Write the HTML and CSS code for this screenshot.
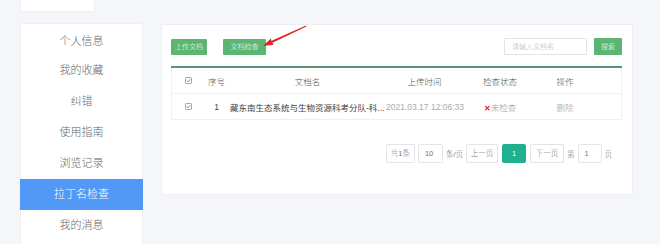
FILE: index.html
```html
<!DOCTYPE html>
<html lang="zh">
<head>
<meta charset="utf-8">
<link rel="stylesheet" href="styles.css">
</head>
<body>
<div class="topbox"></div>
<div class="layout">
  <nav class="sidebar">
    <div class="nav-item">个人信息</div>
    <div class="nav-item">我的收藏</div>
    <div class="nav-item">纠错</div>
    <div class="nav-item">使用指南</div>
    <div class="nav-item">浏览记录</div>
    <div class="nav-item active">拉丁名检查</div>
    <div class="nav-item">我的消息</div>
  </nav>
  <main class="panel">
    <svg class="arrow" width="160" height="30" viewBox="0 0 160 30">
      <polygon points="144,0.4 144.5,1.4 110.5,17.8 109.6,15.8" fill="#e02626"/>
      <polygon points="101,21 111.6,19.8 108.6,13.8" fill="#e02626"/>
    </svg>
    <div class="toolbar">
      <div class="btns">
        <button class="btn btn-upload">上传文档</button>
        <button class="btn btn-check">文档检查</button>
      </div>
      <div class="search">
        <div class="search-input">请输入文档名</div>
        <button class="btn btn-search">搜索</button>
      </div>
    </div>
    <div class="table">
      <div class="tr th">
        <div class="c c-chk"><svg class="chk" viewBox="0 0 8 8"><rect x="0.5" y="0.5" width="7" height="7" rx="1" fill="none" stroke="#888" stroke-width="0.9"/><path d="M2 4.1 L3.5 5.5 L6 2.6" fill="none" stroke="#777" stroke-width="0.9"/></svg></div>
        <div class="c c-no">序号</div>
        <div class="c c-name">文档名</div>
        <div class="c c-time">上传时间</div>
        <div class="c c-status">检查状态</div>
        <div class="c c-op">操作</div>
        <div class="c"></div>
      </div>
      <div class="tr td">
        <div class="c c-chk"><svg class="chk" viewBox="0 0 8 8"><rect x="0.5" y="0.5" width="7" height="7" rx="1" fill="none" stroke="#888" stroke-width="0.9"/><path d="M2 4.1 L3.5 5.5 L6 2.6" fill="none" stroke="#777" stroke-width="0.9"/></svg></div>
        <div class="c c-no">1</div>
        <div class="c c-name name">藏东南生态系统与生物资源科考分队-科...</div>
        <div class="c c-time time">2021.03.17 12:06:33</div>
        <div class="c c-status status"><span class="x">✕</span>未检查</div>
        <div class="c c-op op">删除</div>
        <div class="c"></div>
      </div>
    </div>
    <div class="pager">
      <span class="pbox w29">共1条</span>
      <span class="pinput w25">10</span>
      <span class="ptext">条/页</span>
      <span class="pbox w32">上一页</span>
      <span class="pbox current">1</span>
      <span class="pbox w34">下一页</span>
      <span class="ptext">第</span>
      <span class="pinput w24">1</span>
      <span class="ptext">页</span>
    </div>
  </main>
</div>
</body>
</html>
```
FILE: styles.css
```css
* { box-sizing: border-box; }
html, body { margin: 0; padding: 0; }
body {
  width: 660px;
  height: 244px;
  overflow: hidden;
  background: #f4f6f9;
  font-family: "Liberation Sans", "Noto Sans CJK SC", sans-serif;
  color: #555;
}
.topbox {
  margin-left: 20px;
  width: 75px;
  height: 12px;
  background: #fff;
  border: 1px solid #eef0f3;
  border-top: none;
}
.layout {
  display: flex;
  gap: 18px;
  margin-top: 11px;
  padding-left: 20px;
  align-items: flex-start;
}
.sidebar {
  width: 123px;
  background: #fff;
  border: 1px solid #eef0f3;
  border-bottom: none;
  height: 230px;
}
.nav-item {
  height: 31px;
  line-height: 31px;
  text-align: center;
  font-size: 11px;
  font-weight: 300;
  color: #666;
  margin: 0 -1px;
}
.nav-item:first-child { padding-top: 2px; }
.nav-item.active {
  background: #5298f6;
  color: #fff;
}
.panel {
  position: relative;
  width: 472px;
  margin-top: 1px;
  background: #fff;
  border: 1px solid #eceef2;
  padding: 13px 10px 31px 9px;
}
.arrow {
  position: absolute;
  left: 0;
  top: 0;
}
.toolbar {
  display: flex;
  justify-content: space-between;
  align-items: center;
  height: 17px;
}
.btns { display: flex; gap: 16px; align-items: center; }
.search { display: flex; gap: 7px; align-items: center; }
.btn {
  border: none;
  margin: 0;
  padding: 0;
  height: 16px;
  background: #5cb673;
  color: #fff;
  font-family: "Liberation Sans", "Noto Sans CJK SC", sans-serif;
  font-size: 7px;
  font-weight: 300;
  line-height: 16px;
  border-radius: 1px;
  text-align: center;
}
.btn-upload { width: 36px; }
.btn-check { width: 43px; }
.btn-search { width: 28px; height: 17px; }
.search-input {
  width: 83px;
  height: 17px;
  border: 1px solid #e3e5e8;
  font-size: 7px;
  font-weight: 300;
  color: #b0b0b0;
  line-height: 15px;
  padding-left: 7px;
}
.table {
  margin-top: 11px;
  border-top: 2px solid #5a9278;
  width: 451px;
}
.tr {
  display: grid;
  grid-template-columns: 32px 25px 157px 77px 74px 56px 1fr;
  height: 26px;
  align-items: center;
  font-size: 8.5px;
  border: 1px solid #eef0f2;
  border-top: none;
}
.c { text-align: center; white-space: nowrap; font-weight: 300; }
.c-chk { display: flex; justify-content: center; }
.chk { width: 7px; height: 7px; display: block; }
.th { color: #555; }
.td { color: #444; }
.name { text-align: left; color: #444; padding-left: 1px; font-weight: 400; }
.time { color: #aaa; text-align: left; }
.status { color: #999; }
.x { color: #e02a2a; font-size: 8px; font-weight: bold; }
.op { color: #999; }
.pager {
  display: flex;
  justify-content: flex-end;
  align-items: center;
  gap: 3px;
  margin-top: 24px;
  padding-right: 10px;
  font-size: 7.5px;
  font-weight: 300;
  color: #777;
}
.pbox {
  height: 19px;
  line-height: 17px;
  border: 1px solid #e2e4e7;
  border-radius: 2px;
  text-align: center;
  white-space: nowrap;
}
.w29 { width: 29px; }
.w32 { width: 32px; }
.w34 { width: 34px; }
.w25 { width: 25px; }
.w24 { width: 24px; }
.pbox.current {
  width: 24px;
  margin: 0 1px;
  background: #1fb18f;
  border-color: #1fb18f;
  color: #fff;
}
.pinput {
  height: 19px;
  line-height: 17px;
  border: 1px solid #e2e4e7;
  padding-left: 6px;
  border-radius: 2px;
}
.ptext { white-space: nowrap; }
```
